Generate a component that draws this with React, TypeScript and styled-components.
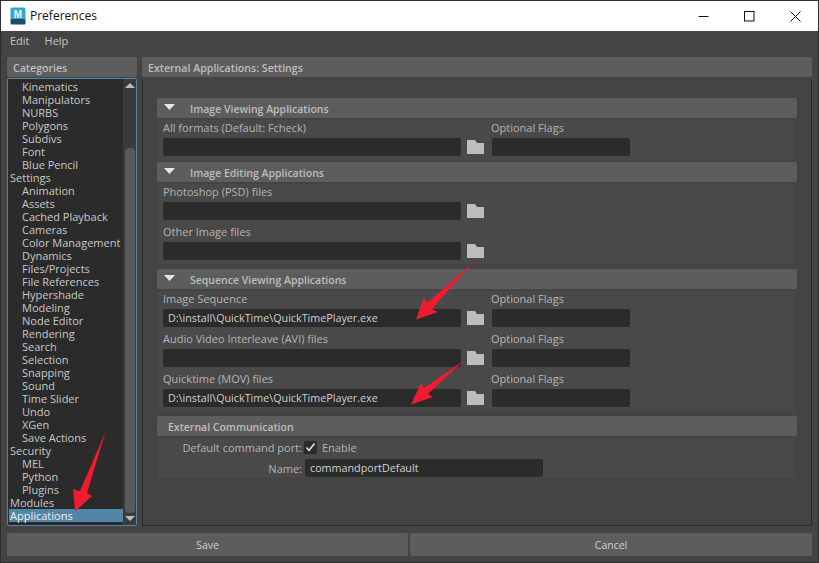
import styled, { createGlobalStyle } from "styled-components";

const GlobalStyle = createGlobalStyle`
  html, body {
    margin: 0;
    padding: 0;
    background: #444444;
  }
  * {
    box-sizing: border-box;
  }
`;

const categories: [string, boolean][] = [
  ["Kinematics", true],
  ["Manipulators", true],
  ["NURBS", true],
  ["Polygons", true],
  ["Subdivs", true],
  ["Font", true],
  ["Blue Pencil", true],
  ["Settings", false],
  ["Animation", true],
  ["Assets", true],
  ["Cached Playback", true],
  ["Cameras", true],
  ["Color Management", true],
  ["Dynamics", true],
  ["Files/Projects", true],
  ["File References", true],
  ["Hypershade", true],
  ["Modeling", true],
  ["Node Editor", true],
  ["Rendering", true],
  ["Search", true],
  ["Selection", true],
  ["Snapping", true],
  ["Sound", true],
  ["Time Slider", true],
  ["Undo", true],
  ["XGen", true],
  ["Save Actions", true],
  ["Security", false],
  ["MEL", true],
  ["Python", true],
  ["Plugins", true],
  ["Modules", false],
  ["Applications", false],
];

const QT_PATH = "D:\\install\\QuickTime\\QuickTimePlayer.exe";

function FolderIcon() {
  return (
    <FolderSvg viewBox="0 0 17 14">
      <path d="M0 0h8l2 3h7V14H0z" fill="#bdbdbd" />
    </FolderSvg>
  );
}

function FileField({ label, value, flags }: { label: string; value?: string; flags?: boolean }) {
  return (
    <FieldGrid>
      <FieldLabel>{label}</FieldLabel>
      {flags ? <FieldLabel>Optional Flags</FieldLabel> : <span />}
      <PathRow>
        <PathInput>{value}</PathInput>
        <FolderIcon />
      </PathRow>
      {flags ? <FlagsInput /> : <span />}
    </FieldGrid>
  );
}

function SectionHeader({ title, open = true }: { title: string; open?: boolean }) {
  return (
    <HeaderBar $open={open}>
      {open && (
        <Triangle viewBox="0 0 11 6">
          <path d="M0 0h11L5.500 6z" fill="#e6e6e6" />
        </Triangle>
      )}
      {title}
    </HeaderBar>
  );
}

export default function App() {
  return (
    <Win>
      <GlobalStyle />
      <TitleBar>
        <AppIcon viewBox="0 0 16 18">
          <rect x="0.500" y="0.500" width="15" height="13" rx="1.500" fill="#37a5cc" />
          <rect x="0.500" y="12" width="15" height="5.500" rx="1" fill="#1f4a66" />
          <text x="8" y="10.500" textAnchor="middle" fontSize="10" fontWeight="700" fontFamily="Liberation Sans, sans-serif" fill="#f4fbff">
            M
          </text>
        </AppIcon>
        <WinTitle>Preferences</WinTitle>
        <WinControls>
          <WinButton viewBox="0 0 11 11">
            <path d="M0.500 5.500h10" stroke="#111" fill="none" />
          </WinButton>
          <WinButton viewBox="0 0 11 11">
            <rect x="0.500" y="0.500" width="9.500" height="9.500" stroke="#111" fill="none" />
          </WinButton>
          <WinButton viewBox="0 0 11 11">
            <path d="M0.500 0.500l10 10M10.500 0.500l-10 10" stroke="#111" fill="none" />
          </WinButton>
        </WinControls>
      </TitleBar>

      <MenuBar>
        <MenuItem>Edit</MenuItem>
        <MenuItem>Help</MenuItem>
      </MenuBar>

      <Columns>
        <LeftColumn>
          <PaneTitle>Categories</PaneTitle>
          <ListBox>
            <ListRows>
              {categories.map(([name, indent]) => (
                <ListRow key={name} $indent={indent} $selected={name === "Applications"}>
                  {name}
                </ListRow>
              ))}
            </ListRows>
            <ScrollBar>
              <ScrollArrow $down={false} />
              <ScrollThumb />
              <ScrollArrow $down />
            </ScrollBar>
          </ListBox>
        </LeftColumn>

        <RightColumn>
          <PaneTitle>External Applications: Settings</PaneTitle>
          <SettingsPanel>
            <Section $gap={2}>
              <SectionHeader title="Image Viewing Applications" />
              <SectionBody>
                <FileField label="All formats (Default: Fcheck)" flags />
              </SectionBody>
            </Section>
            <Section $gap={5}>
              <SectionHeader title="Image Editing Applications" />
              <SectionBody>
                <FileField label="Photoshop (PSD) files" />
                <FileField label="Other Image files" />
              </SectionBody>
            </Section>
            <Section $gap={5}>
              <SectionHeader title="Sequence Viewing Applications" />
              <SectionBody>
                <FileField label="Image Sequence" value={QT_PATH} flags />
                <FileField label="Audio Video Interleave (AVI) files" flags />
                <FileField label="Quicktime (MOV) files" value={QT_PATH} flags />
              </SectionBody>
            </Section>
            <Section $gap={0}>
              <SectionHeader title="External Communication" open={false} />
              <CommBody>
                <CommLabel>Default command port:</CommLabel>
                <CheckRow>
                  <CheckBox viewBox="0 0 13 13">
                    <rect width="13" height="13" rx="1.500" fill="#2b2b2b" />
                    <path d="M2.500 6.500l2.500 3 5.500-7" stroke="#e2e2e2" strokeWidth="1.600" fill="none" />
                  </CheckBox>
                  <span>Enable</span>
                </CheckRow>
                <CommLabel>Name:</CommLabel>
                <NameInput>commandportDefault</NameInput>
              </CommBody>
            </Section>
          </SettingsPanel>
        </RightColumn>
      </Columns>

      <Footer>
        <FooterButton>Save</FooterButton>
        <FooterButton>Cancel</FooterButton>
      </Footer>

      <Annotations viewBox="0 0 819 563">
        <path d="M105.500 432L87 493L92 496L75 511.500L73 489L80 491z" fill="#ee1c2e" />
        <path d="M472.500 263L432 309L438 312L416 319.500L424 297L427 303z" fill="#ee1c2e" />
        <path d="M464.500 360L428 394L433 397L411 404.500L421 383L424 388z" fill="#ee1c2e" />
      </Annotations>
    </Win>
  );
}

const Win = styled.div`
  position: relative;
  width: 819px;
  height: 563px;
  display: flex;
  flex-direction: column;
  overflow: hidden;
  background: #444444;
  border: 1px solid #2e2e2e;
  font-family: "Open Sans", "Liberation Sans", sans-serif;
  font-size: 11px;
  color: #bdbdbd;
`;

const TitleBar = styled.div`
  height: 30px;
  flex: none;
  display: flex;
  align-items: center;
  padding-left: 9px;
  background: #ffffff;
  color: #111111;
`;

const AppIcon = styled.svg`
  width: 16px;
  height: 18px;
  flex: none;
`;

const WinTitle = styled.div`
  margin-left: 4px;
  margin-top: -1px;
  font-size: 12px;
`;

const WinControls = styled.div`
  margin-left: auto;
  display: flex;
  padding-right: 17px;
  gap: 35px;
`;

const WinButton = styled.svg`
  width: 11px;
  height: 11px;
`;

const MenuBar = styled.div`
  height: 26px;
  flex: none;
  display: flex;
  align-items: center;
  gap: 15px;
  padding: 0 0 7px 9px;
`;

const MenuItem = styled.span`
  color: #c4c4c4;
`;

const Columns = styled.div`
  flex: 1;
  min-height: 0;
  display: flex;
  gap: 5px;
  padding: 0 6px;
`;

const LeftColumn = styled.div`
  width: 130px;
  flex: none;
  display: flex;
  flex-direction: column;
`;

const RightColumn = styled.div`
  flex: 1;
  min-width: 0;
  display: flex;
  flex-direction: column;
`;

const PaneTitle = styled.div`
  height: 20px;
  flex: none;
  padding: 1px 0 0 6px;
  line-height: 20px;
  border-radius: 2px;
  background: #5d5d5d;
  color: #bdbdbd;
  font-size: 10.600px;
  font-weight: 600;
`;

const ListBox = styled.div`
  margin-top: 1px;
  height: 450px;
  display: flex;
  overflow: hidden;
  border: 1px solid #5285a6;
  border-radius: 2px;
  background: #2b2b2b;
`;

const ListRows = styled.div`
  flex: 1;
  min-width: 0;
  padding: 1px 0 0 1px;
`;

const ListRow = styled.div<{ $indent: boolean; $selected: boolean }>`
  height: 13px;
  line-height: 13px;
  white-space: nowrap;
  padding-left: ${(p) => (p.$indent ? "13px" : "1px")};
  background: ${(p) => (p.$selected ? "#5285a6" : "transparent")};
  color: ${(p) => (p.$selected ? "#f0f0f0" : "#c8c8c8")};
`;

const ScrollBar = styled.div`
  width: 13px;
  flex: none;
  display: flex;
  flex-direction: column;
  align-items: center;
  padding-top: 4px;
  background: #3a3a3a;
`;

const ScrollArrow = styled.div<{ $down: boolean }>`
  width: 0;
  height: 0;
  flex: none;
  border-left: 5px solid transparent;
  border-right: 5px solid transparent;
  ${(p) => (p.$down ? "border-top: 5px solid #bdbdbd;" : "border-bottom: 5px solid #bdbdbd;")}
`;

const ScrollThumb = styled.div`
  width: 10px;
  height: 365px;
  margin: 60px 0 3px;
  flex: none;
  border-radius: 4px;
  background: #5a5a5a;
`;

const SettingsPanel = styled.div`
  margin-top: 3px;
  height: 447px;
  padding: 18px 14px 0 14px;
  border: 1px solid #2b2b2b;
  border-top: none;
  overflow: hidden;
`;

const Section = styled.div<{ $gap: number }>`
  margin-bottom: ${(p) => p.$gap}px;
`;

const HeaderBar = styled.div<{ $open: boolean }>`
  height: 20px;
  display: flex;
  align-items: center;
  padding: 1px 0 0 ${(p) => (p.$open ? "7px" : "11px")};
  border-radius: 2px;
  background: #5d5d5d;
  color: #bdbdbd;
  font-size: 10.500px;
  font-weight: 600;
`;

const Triangle = styled.svg`
  width: 11px;
  height: 6px;
  margin: -4px 15px 0 0;
  flex: none;
`;

const SectionBody = styled.div`
  margin: 2px 2px 0 1px;
  padding-left: 5px;
  background: #494949;
`;

const FieldGrid = styled.div`
  display: grid;
  grid-template-columns: 328px 139px;
  grid-template-rows: 18px 18px;
  padding-bottom: 4px;
`;

const FieldLabel = styled.div`
  line-height: 16px;
  color: #b4b4b4;
`;

const PathRow = styled.div`
  display: flex;
  align-items: center;
  gap: 6px;
`;

const inputLook = `
  height: 18px;
  line-height: 19px;
  border-radius: 2px;
  background: #2b2b2b;
  color: #d0d0d0;
  padding-left: 5px;
  font-size: 10.750px;
  white-space: nowrap;
`;

const PathInput = styled.div`
  ${inputLook}
  width: 298px;
  flex: none;
`;

const FlagsInput = styled.div`
  ${inputLook}
  margin-left: 1px;
`;

const FolderSvg = styled.svg`
  width: 17px;
  height: 14px;
  flex: none;
`;

const CommBody = styled.div`
  margin: 2px 2px 0 1px;
  height: 40px;
  display: grid;
  grid-template-columns: 144px 239px;
  grid-template-rows: 19px 18px;
  column-gap: 2px;
  row-gap: 2px;
  align-items: center;
  background: #494949;
`;

const CommLabel = styled.div`
  text-align: right;
  color: #b4b4b4;
`;

const CheckRow = styled.div`
  display: flex;
  align-items: center;
  gap: 5px;
  color: #b4b4b4;
`;

const CheckBox = styled.svg`
  width: 13px;
  height: 13px;
  flex: none;
`;

const NameInput = styled.div`
  ${inputLook}
  margin-left: 1px;
`;

const Footer = styled.div`
  height: 36px;
  flex: none;
  display: grid;
  grid-template-columns: 401px 402px;
  gap: 2px;
  padding: 7px 6px 6px;
`;

const FooterButton = styled.div`
  border-radius: 2px;
  background: #5d5d5d;
  color: #d0d0d0;
  font-size: 10.500px;
  display: flex;
  align-items: center;
  justify-content: center;
`;

const Annotations = styled.svg`
  position: absolute;
  left: -1px;
  top: -1px;
  width: 819px;
  height: 563px;
  pointer-events: none;
`;
